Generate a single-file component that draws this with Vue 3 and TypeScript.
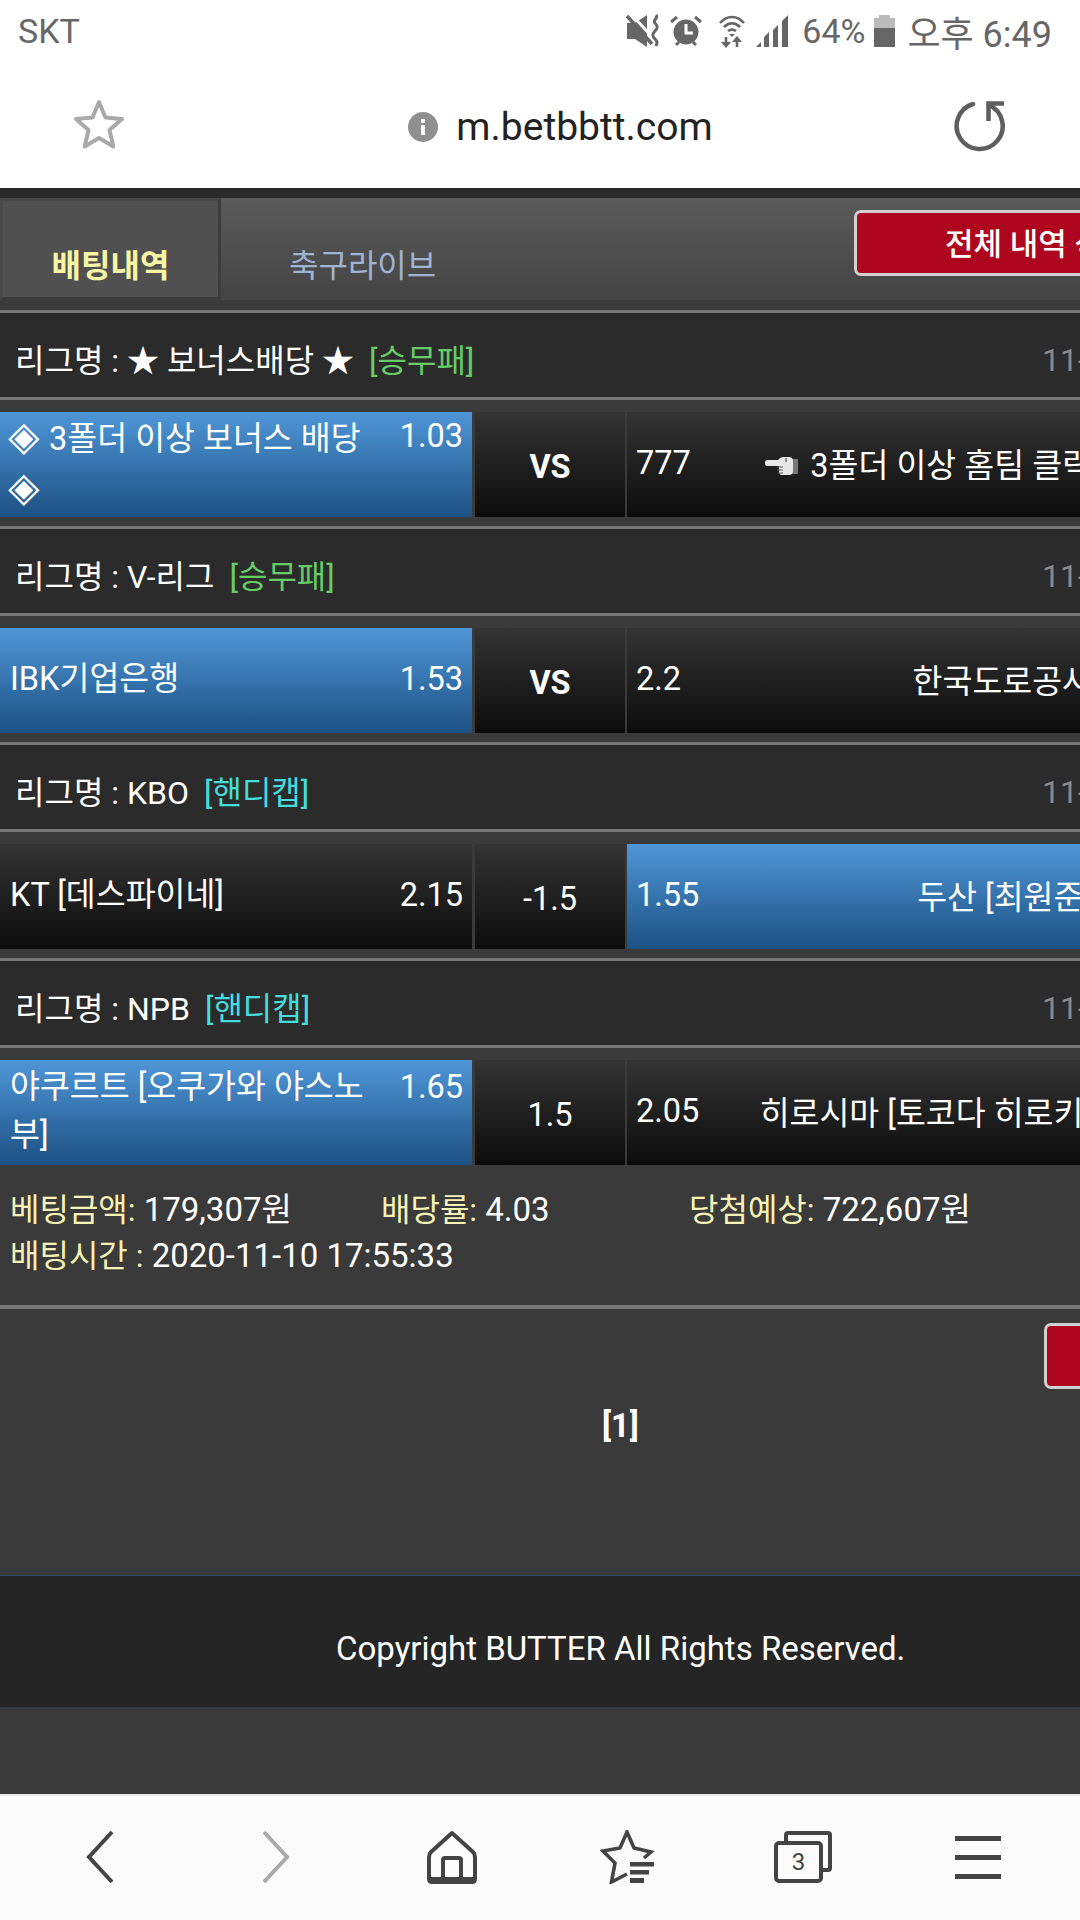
<script setup lang="ts">
interface Side { name: string; odds: string; on?: boolean; dia?: boolean }
interface Game {
  league: string
  tag: string
  tagColor: string
  home: Side
  mid: string
  midBold?: boolean
  away: Side
  hand?: boolean
}

const games: Game[] = [
  {
    league: '리그명 : ★ 보너스배당 ★',
    tag: '[승무패]',
    tagColor: '#66cc66',
    home: { name: '3폴더 이상 보너스 배당', odds: '1.03', on: true, dia: true },
    mid: 'VS',
    midBold: true,
    away: { name: '3폴더 이상 홈팀 클릭', odds: '777' },
    hand: true,
  },
  {
    league: '리그명 : V-리그',
    tag: '[승무패]',
    tagColor: '#66cc66',
    home: { name: 'IBK기업은행', odds: '1.53', on: true },
    mid: 'VS',
    midBold: true,
    away: { name: '한국도로공사', odds: '2.2' },
  },
  {
    league: '리그명 : KBO',
    tag: '[핸디캡]',
    tagColor: '#44dddd',
    home: { name: 'KT [데스파이네]', odds: '2.15' },
    mid: '-1.5',
    away: { name: '두산 [최원준]', odds: '1.55', on: true },
  },
  {
    league: '리그명 : NPB',
    tag: '[핸디캡]',
    tagColor: '#44dddd',
    home: { name: '야쿠르트 [오쿠가와 야스노부]', odds: '1.65', on: true },
    mid: '1.5',
    away: { name: '히로시마 [토코다 히로키]', odds: '2.05' },
  },
]
</script>

<template>
  <div class="phone">
    <div class="status">
      <span class="carrier">SKT</span>
      <div class="status-right">
        <svg class="ic-mute" width="33" height="34" viewBox="0 0 33 34">
          <path d="M1 9h8l12-8v32l-12-8H1z" fill="#666" />
          <path d="M5 0l24 26" stroke="#fff" stroke-width="3" />
          <path d="M1 2l25 28" stroke="#666" stroke-width="3.500" />
          <path d="M30 1c3 3-4 5-1 8s3 5 0 8-3 5 0 8 2 4 1 7" stroke="#666" stroke-width="3" fill="none" />
        </svg>
        <svg class="ic-alarm" width="32" height="32" viewBox="0 0 32 32">
          <circle cx="16" cy="17" r="12.500" fill="#666" />
          <path d="M16 9v9h7" stroke="#fff" stroke-width="3" fill="none" />
          <path d="M1 7l6-5M31 7l-6-5M6 30l3-3M26 30l-3-3" stroke="#666" stroke-width="3" />
        </svg>
        <svg class="ic-wifi" width="28" height="33" viewBox="0 0 28 33">
          <path d="M2 8c7-8 17-8 24 0M6 12c5-5 11-5 16 0M10 16c3-2 5-2 8 0" stroke="#666" stroke-width="2.600" fill="none" />
          <path d="M11 19h6l-3 3z" fill="#666" />
          <path d="M8 22v7M19 32v-7" stroke="#666" stroke-width="2.600" />
          <path d="M3 27h10l-5 6zM14 27h10l-5-6z" fill="#666" />
        </svg>
        <svg class="ic-signal" width="32" height="32" viewBox="0 0 32 32">
          <path d="M0 32l5-5v5zM8 32V22l5-5v15zM17 32V15l5-5v22zM26 32V6l6-6v32z" fill="#666" />
        </svg>
        <span class="pct">64%</span>
        <svg class="ic-batt" width="21" height="32" viewBox="0 0 21 32">
          <path d="M5 0h11v3h5v12H0V3h5z" fill="#bbb" />
          <path d="M0 13h21v19H0z" fill="#666" />
        </svg>
        <span class="clock">오후 6:49</span>
      </div>
    </div>

    <div class="urlbar">
      <svg class="ic-star" width="52" height="54" viewBox="0 0 52 54">
        <path d="M26 4l6.500 15.500 16.500 1.500-12.500 11 3.800 16.500L26 40l-14.300 8.500 3.800-16.500L3 21l16.500-1.500z" fill="none" stroke="#a9a9a9" stroke-width="4" stroke-linejoin="round" />
      </svg>
      <div class="url">
        <svg width="30" height="30" viewBox="0 0 30 30">
          <circle cx="15" cy="15" r="15" fill="#8f8f8f" />
          <path d="M13 13h4v10h-4zM13 7h4v4h-4z" fill="#fff" />
        </svg>
        <span>m.betbbtt.com</span>
      </div>
      <svg class="ic-reload" width="54" height="54" viewBox="0 0 54 54">
        <path d="M19 6A23 23 0 1 0 35 7" fill="none" stroke="#5e5e5e" stroke-width="4.500" stroke-linecap="round" />
        <path d="M50 5.500H34.500V23" fill="none" stroke="#5e5e5e" stroke-width="4.500" />
      </svg>
    </div>

    <main class="page">
      <div class="tabs">
        <div class="tab active">배팅내역</div>
        <div class="tab">축구라이브</div>
        <button class="red-btn top-btn">전체 내역 삭제</button>
      </div>

      <section v-for="g in games" :key="g.league" class="game">
        <div class="league">
          <span>{{ g.league }}</span>
          <span class="tag" :style="{ color: g.tagColor }">{{ g.tag }}</span>
          <span class="date">11-10 18:30</span>
        </div>
        <div class="row">
          <div class="cell home" :class="{ on: g.home.on }">
            <div class="home-in">
              <span class="name"><span v-if="g.home.dia" class="dia">◈</span>{{ g.home.dia ? ' ' : '' }}{{ g.home.name }}{{ g.home.dia ? ' ' : '' }}<span v-if="g.home.dia" class="dia">◈</span></span>
              <span class="odds">{{ g.home.odds }}</span>
            </div>
          </div>
          <div class="cell mid" :class="{ bold: g.midBold }">{{ g.mid }}</div>
          <div class="cell away" :class="{ on: g.away.on }">
            <span class="odds">{{ g.away.odds }}</span>
            <span class="away-name">
              <svg v-if="g.hand" class="hand" width="34" height="22" viewBox="0 0 34 22">
                <path d="M27 2h6v15h-6z" fill="#777" />
                <path d="M2 3h11q2-3 6-3h5q4 0 4 4v10q0 4-4 4h-7q-3 0-3-3v-6H2q-2 0-2-3t2-3z" fill="#e8e8e8" />
                <path d="M12 10h6M12 13h6M13 16h5M21 1v4" stroke="#555" stroke-width="1.200" />
              </svg>{{ g.away.name }}
            </span>
          </div>
        </div>
      </section>

      <div class="summary">
        <div class="sum-line">
          <span class="s1"><b>베팅금액:</b> 179,307원</span>
          <span class="s2"><b>배당률:</b> 4.03</span>
          <span class="s3"><b>당첨예상:</b> 722,607원</span>
        </div>
        <div class="sum-line"><span><b>배팅시간 :</b> 2020-11-10 17:55:33</span></div>
      </div>

      <div class="pager-area">
        <button class="red-btn low-btn"></button>
        <div class="pager">[1]</div>
      </div>

      <footer class="copy">Copyright BUTTER All Rights Reserved.</footer>
    </main>

    <nav class="nav">
      <svg width="30" height="54" viewBox="0 0 30 54"><path d="M27 2L4 27l23 25" fill="none" stroke="#444" stroke-width="4" /></svg>
      <svg width="30" height="54" viewBox="0 0 30 54"><path d="M3 2l23 25L3 52" fill="none" stroke="#aaa" stroke-width="4" /></svg>
      <svg width="52" height="54" viewBox="0 0 52 54">
        <path d="M26 3L5 22q-2 2-2 5v22q0 3 3 3h40q3 0 3-3V27q0-3-2-5zM3 49h46M17 49V30q0-2 2-2h14q2 0 2 2v19" fill="none" stroke="#444" stroke-width="4" stroke-linejoin="round" />
      </svg>
      <svg width="56" height="54" viewBox="0 0 56 54">
        <path d="M44 28l7-6-17-4-7-16-7 16-17 3 12 12-3.500 19L27 44" fill="none" stroke="#444" stroke-width="3.600" stroke-linejoin="miter" />
        <path d="M30 32h24v4.500H30zM30 40h19v4.500H30zM30 48h14v5H30z" fill="#444" />
      </svg>
      <div class="tabs-ic">
        <svg width="58" height="52" viewBox="0 0 58 52">
          <path d="M12 10V4q0-2 2-2h40q2 0 2 2v33q0 2-2 2h-6" fill="none" stroke="#444" stroke-width="4" />
          <rect x="2" y="12" width="45" height="38" rx="3" fill="#fbfbfb" stroke="#444" stroke-width="4" />
        </svg>
        <span>3</span>
      </div>
      <div class="menu"><i></i><i></i><i></i></div>
    </nav>
  </div>
</template>

<style>
html, body {
  margin: 0;
  background: #3a3a3a;
}
</style>

<style scoped>
.phone {
  width: 1080px;
  height: 1920px;
  display: flex;
  flex-direction: column;
  overflow: hidden;
  font-family: Roboto, "Noto Sans CJK KR", sans-serif;
  font-size: 32.5px;
  color: #fff;
}

.status {
  height: 60px;
  flex: none;
  box-sizing: border-box;
  background: #fff;
  display: flex;
  justify-content: space-between;
  align-items: center;
  padding: 2px 28px 0 18px;
  color: #666;
  font-size: 34px;
}
.status-right {
  display: flex;
  align-items: center;
}
.ic-alarm { margin-left: 11px; }
.ic-wifi { margin-left: 16px; }
.ic-signal { margin-left: 10px; }
.pct { margin-left: 14px; }
.ic-batt { margin-left: 9px; }
.clock { margin-left: 12px; font-size: 36px; }

.urlbar {
  height: 128px;
  flex: none;
  box-sizing: border-box;
  background: #fff;
  display: flex;
  align-items: center;
  padding: 2px 72px 0 73px;
}
.url {
  flex: 1;
  display: flex;
  justify-content: center;
  align-items: center;
  gap: 18px;
  font-size: 39px;
  color: #222;
  padding: 4px 0 0 42px;
}

.page {
  flex: 1;
  min-height: 0;
  background: #3a3a3a;
  display: flex;
  flex-direction: column;
}

.tabs {
  height: 102px;
  flex: none;
  margin-top: 10px;
  box-shadow: 0 -10px 0 #2a2a2a;
  background: linear-gradient(#5a5a5a, #444);
  display: flex;
  position: relative;
  margin-bottom: 10px;
}
.tab {
  width: 221px;
  box-sizing: border-box;
  padding-top: 42px;
  text-align: center;
  font-size: 32px;
  color: #9fb3d3;
}
.tab + .tab {
  width: 280px;
  padding-right: 50px;
  padding-left: 68px;
  white-space: nowrap;
  text-align: left;
}
.tab.active {
  background: #505050;
  border: 3px solid #484848;
  border-right-color: #3c3c3c;
  border-bottom-color: #3c3c3c;
  box-sizing: border-box;
  color: #f6f6a4;
  font-weight: 700;
  padding-top: 39px;
}

.red-btn {
  position: absolute;
  height: 66px;
  width: 300px;
  box-sizing: border-box;
  background: #ad061e;
  border: 3px solid #d0d0d0;
  border-radius: 7px;
  color: #fff;
  font-family: inherit;
  font-size: 31px;
  font-weight: 500;
  white-space: nowrap;
  text-align: left;
}
.top-btn {
  left: 854px;
  top: 12px;
  padding: 0 0 4px 88px;
}
.low-btn {
  left: 1044px;
  top: 14px;
}

.game { flex: none; }
.league {
  background: #2b2b2b;
  border-top: 3px solid #777;
  border-bottom: 3px solid #777;
  display: flex;
  align-items: center;
  padding: 6px 0 0 15px;
  box-sizing: content-box;
  height: 78px;
  position: relative;
  white-space: nowrap;
  font-size: 32px;
}
.tag { margin-left: 15px; }
.date {
  position: absolute;
  left: 1042px;
  top: 28px;
  line-height: 38px;
  color: #888;
}

.row {
  height: 105px;
  margin: 12px 0 9px;
  display: flex;
  width: 1100px;
}
.cell {
  height: 105px;
  box-sizing: border-box;
  background: linear-gradient(#333, #0c0c0c);
  display: flex;
  align-items: center;
  white-space: nowrap;
}
.cell.on {
  background: linear-gradient(#4f96d8, #1c5182);
}
.home {
  width: 472px;
  padding: 0 9px 4px 10px;
}
.home-in {
  width: 100%;
  display: flex;
  align-items: flex-start;
  justify-content: space-between;
  gap: 30px;
  line-height: 48px;
}
.name {
  flex: 1;
  white-space: normal;
  word-break: break-all;
}
.dia {
  display: inline-block;
  width: 31px;
  font-size: 41px;
  line-height: 48px;
  text-align: center;
  overflow: visible;
  text-indent: -4px;
}
.mid {
  width: 150px;
  margin-left: 3px;
  justify-content: center;
  padding-top: 4px;
}
.mid.bold { font-weight: 700; }
.away {
  flex: 1;
  margin-left: 2px;
  padding: 0 8px 4px 9px;
  justify-content: space-between;
}
.hand {
  margin-right: 11px;
  vertical-align: -2px;
}

.summary {
  padding: 13px 10px 26px;
  line-height: 46px;
  font-size: 33px;
  border-bottom: 4px solid #777;
  flex: none;
}
.summary b {
  font-weight: 400;
  font-size: 32px;
  color: #f6f1b4;
}
.sum-line { display: flex; }
.s1 { width: 371px; }
.s2 { width: 308px; }

.pager-area {
  height: 266px;
  flex: none;
  position: relative;
}
.pager {
  padding: 98px 0 0 602px;
  font-weight: 700;
}

.copy {
  height: 133px;
  flex: none;
  box-sizing: border-box;
  background: #252525;
  border-top: 1px solid #2a4a66;
  border-bottom: 1px solid #2b3a46;
  display: flex;
  align-items: center;
  padding: 14px 0 0 336px;
  font-size: 33px;
}

.nav {
  height: 126px;
  flex: none;
  box-sizing: border-box;
  background: #fbfbfb;
  border-top: 2px solid #e6e6e6;
  display: grid;
  grid-template-columns: repeat(6, 176px);
  justify-items: center;
  align-items: center;
  padding: 0 0 2px 12px;
}
.tabs-ic {
  position: relative;
  width: 58px;
  height: 52px;
  margin-left: -2px;
}
.tabs-ic span {
  position: absolute;
  left: 2px;
  width: 45px;
  top: 14px;
  text-align: center;
  font-size: 24px;
  line-height: 34px;
  color: #444;
}
.menu {
  width: 46px;
  height: 43px;
  margin-left: -4px;
  display: flex;
  flex-direction: column;
  justify-content: space-between;
}
.menu i {
  display: block;
  height: 5px;
  background: #444;
}
</style>
